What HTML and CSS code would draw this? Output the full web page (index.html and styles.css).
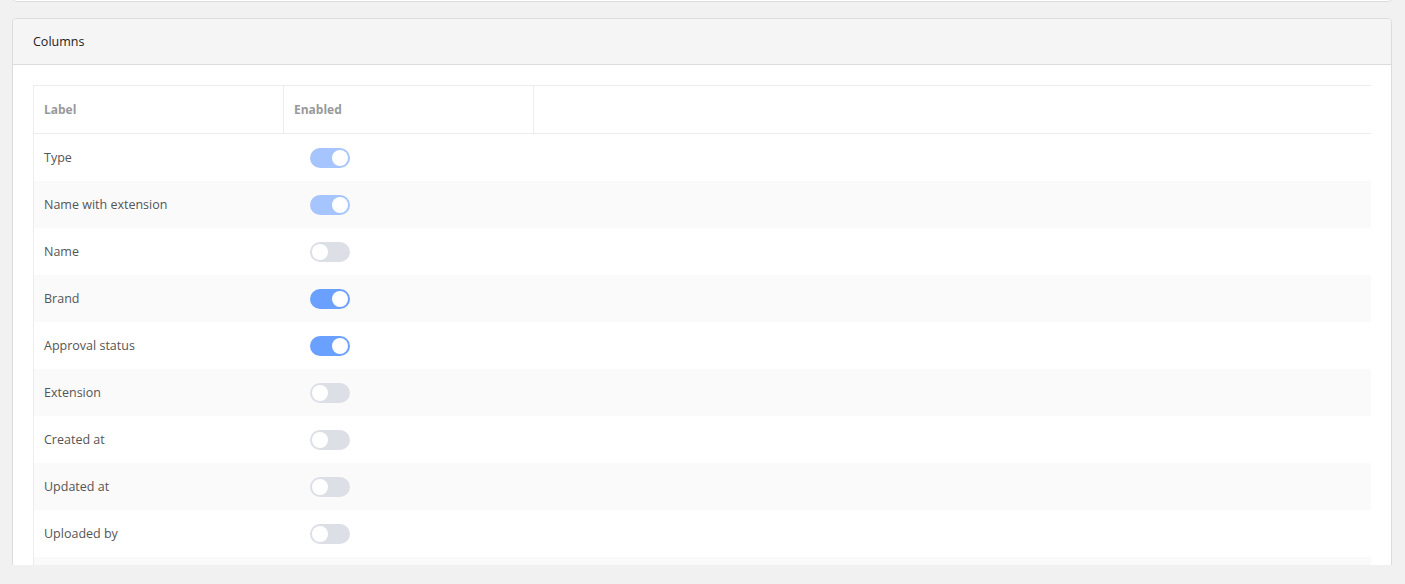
FILE: index.html
```html
<!DOCTYPE html>
<html lang="en">
  <head>
    <meta charset="UTF-8" />
    <meta name="viewport" content="width=device-width, initial-scale=1.0" />
    <title>Columns</title>
    <link rel="stylesheet" href="styles.css">
  </head>
  <body>
    <div class="viewport">
      <div class="page">
        <div class="card card-prev"></div>

        <div class="card">
          <div class="card-header">Columns</div>
          <div class="card-body">
            <div class="columns-table">
              <div class="row head">
                <div class="cell">Label</div>
                <div class="cell">Enabled</div>
                <div class="cell"></div>
              </div>

              <div class="row">
                <div class="cell">Type</div>
                <div class="cell"><span class="toggle on locked"></span></div>
                <div class="cell"></div>
              </div>
              <div class="row">
                <div class="cell">Name with extension</div>
                <div class="cell"><span class="toggle on locked"></span></div>
                <div class="cell"></div>
              </div>
              <div class="row">
                <div class="cell">Name</div>
                <div class="cell"><span class="toggle"></span></div>
                <div class="cell"></div>
              </div>
              <div class="row">
                <div class="cell">Brand</div>
                <div class="cell"><span class="toggle on"></span></div>
                <div class="cell"></div>
              </div>
              <div class="row">
                <div class="cell">Approval status</div>
                <div class="cell"><span class="toggle on"></span></div>
                <div class="cell"></div>
              </div>
              <div class="row">
                <div class="cell">Extension</div>
                <div class="cell"><span class="toggle"></span></div>
                <div class="cell"></div>
              </div>
              <div class="row">
                <div class="cell">Created at</div>
                <div class="cell"><span class="toggle"></span></div>
                <div class="cell"></div>
              </div>
              <div class="row">
                <div class="cell">Updated at</div>
                <div class="cell"><span class="toggle"></span></div>
                <div class="cell"></div>
              </div>
              <div class="row">
                <div class="cell">Uploaded by</div>
                <div class="cell"><span class="toggle"></span></div>
                <div class="cell"></div>
              </div>
              <!-- next row is cut off by the scroll area -->
              <div class="row">
                <div class="cell"></div>
                <div class="cell"></div>
                <div class="cell"></div>
              </div>
            </div>
          </div>
        </div>
      </div>
    </div>
  </body>
</html>
```

FILE: styles.css
```css
body {
  margin: 0;
  padding: 0;
  background: #f1f1f1;
  font-family: "Open Sans", "Noto Sans", sans-serif;
  color: #222;
  height: 584px;
  overflow: hidden;
}

.viewport {
  height: 565px;
  overflow: hidden;
}

.page {
  padding: 0 13px 0 12px;
}

.card {
  background: white;
  border: 1px solid #dcdcdc;
  border-radius: 4px;
}

.card-prev {
  height: 20px;
  margin-top: -20px;
  margin-bottom: 16px;
}

.card-header {
  height: 45px;
  display: flex;
  align-items: center;
  padding: 0 20px;
  background: #f5f5f5;
  border-bottom: 1px solid #dcdcdc;
  border-radius: 4px 4px 0 0;
  font-size: 12.5px;
  color: #222;
}

.card-body {
  padding: 20px 20px 40px 20px;
}

.columns-table {
  border-top: 1px solid #ebebf0;
  border-left: 1px solid #ebebf0;
}

.row {
  display: grid;
  grid-template-columns: 250px 250px 1fr;
  height: 47px;
  font-size: 12.5px;
  color: #555;
}

.row:nth-child(odd) {
  background: #fafafa;
}

.row.head {
  height: 47px;
  background: white;
  border-bottom: 1px solid #ebebf0;
  font-size: 12px;
  font-weight: 700;
  color: #999;
}

.cell {
  display: flex;
  align-items: center;
  padding: 0 10px;
}

.row.head .cell:not(:last-child) {
  border-right: 1px solid #ebebf0;
}

.row:not(.head) .cell:nth-child(2) {
  padding-left: 26px;
}

.toggle {
  position: relative;
  display: inline-block;
  width: 40px;
  height: 20px;
  border-radius: 10px;
  background: #dcdfe6;
}

.toggle::after {
  content: "";
  position: absolute;
  top: 2px;
  left: 2px;
  width: 16px;
  height: 16px;
  border-radius: 50%;
  background: white;
}

.toggle.on {
  background: #6aa0ff;
}

.toggle.on.locked {
  background: #a6c5ff;
}

.toggle.on::after {
  left: 22px;
}
```
